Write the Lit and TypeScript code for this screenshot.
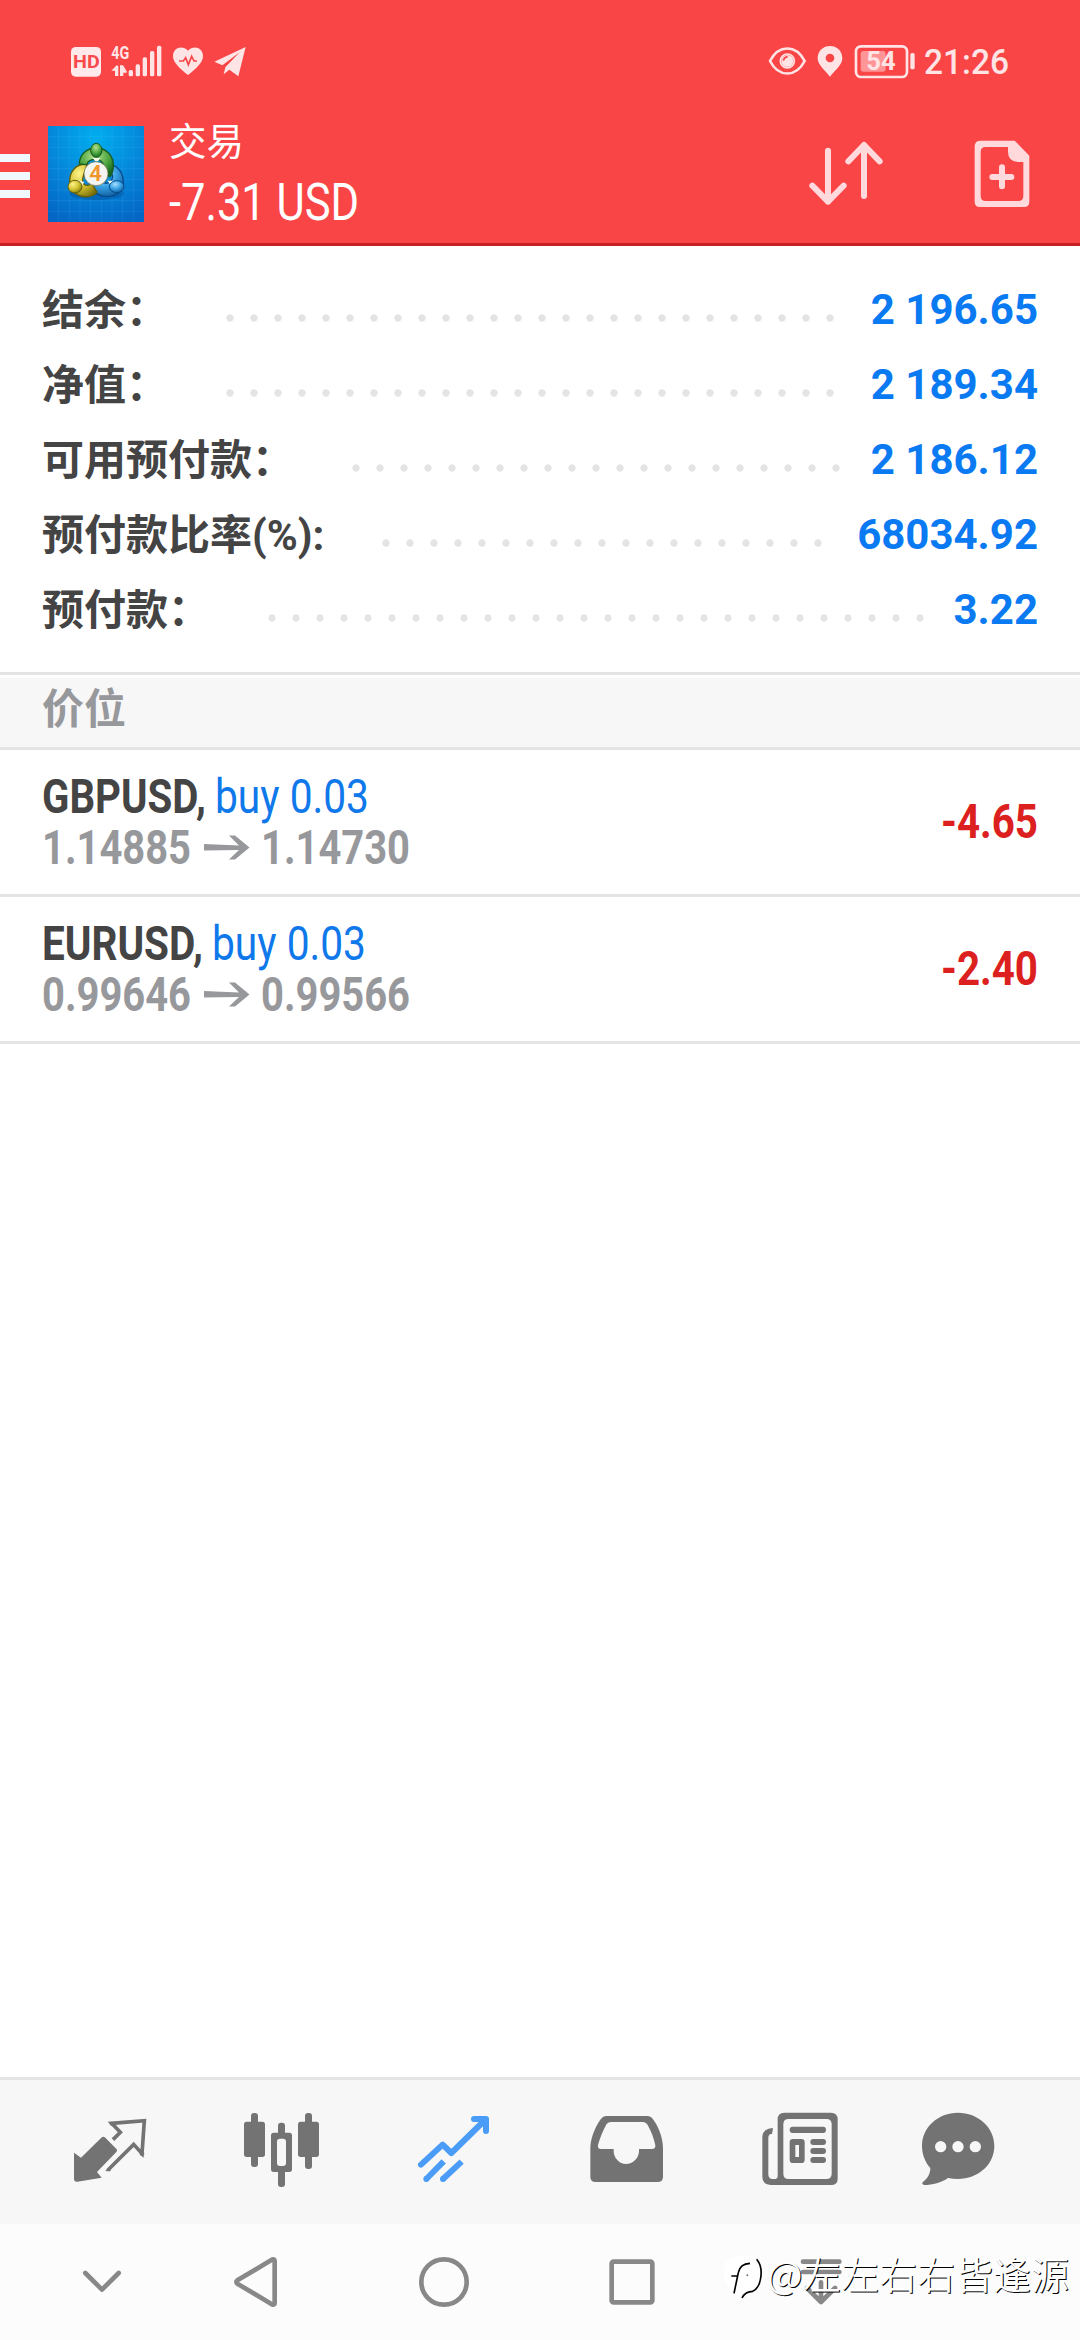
import { LitElement, html, svg, css } from "lit";
import { customElement, property } from "lit/decorators.js";

interface Summary { label: string; dots: number; value: string; }
interface Position {
  symbol: string; symbolWidth: number; side: string; sideWidth: number;
  from: string; to: string; profit: string;
}

/** A single line of text, condensed or widened to a given advance width. */
@customElement("fit-text")
class FitText extends LitElement {
  @property() text = "";
  @property({ type: Number }) width = 100;
  @property({ type: Number }) height = 50;
  @property({ type: Number }) base = 40;
  static styles = css`
    :host { display: block; flex: none; }
    svg { display: block; overflow: visible; }
    text { fill: currentColor; white-space: pre; }
  `;
  render() {
    return html`<svg width=${this.width} height=${this.height}>
      <text x="0" y=${this.base} textLength=${this.width} lengthAdjust="spacingAndGlyphs">${this.text}</text>
    </svg>`;
  }
}

@customElement("app-root")
class AppRoot extends LitElement {
  private summary: Summary[] = [
    { label: "结余：", dots: 26, value: "2 196.65" },
    { label: "净值：", dots: 26, value: "2 189.34" },
    { label: "可用预付款：", dots: 21, value: "2 186.12" },
    { label: "预付款比率(%):", dots: 19, value: "68034.92" },
    { label: "预付款：", dots: 28, value: "3.22" },
  ];

  private positions: Position[] = [
    { symbol: "GBPUSD,", symbolWidth: 164, side: "buy 0.03", sideWidth: 154, from: "1.14885", to: "1.14730", profit: "-4.65" },
    { symbol: "EURUSD,", symbolWidth: 161, side: "buy 0.03", sideWidth: 154, from: "0.99646", to: "0.99566", profit: "-2.40" },
  ];

  static styles = css`
    :host {
      display: flex; flex-direction: column; position: relative;
      width: 1080px; height: 2340px; overflow: hidden;
      background: #fff; color: #444;
      font-family: Roboto, "Noto Sans CJK SC", sans-serif;
    }
    svg { display: block; flex: none; }
    .header { box-sizing: border-box; height: 246px; background: #fa4547; border-bottom: 3px solid #c92024; }
    .status { display: flex; justify-content: space-between; height: 90px; }
    .status text { font-family: Roboto, sans-serif; font-weight: 500; }
    .status .strong { font-weight: 700; }
    .toolbar { display: flex; height: 153px; }
    .menu { display: flex; flex-direction: column; gap: 10px; padding-top: 64px; width: 48px; }
    .menu i { width: 30px; height: 8px; background: #f0f7ff; }
    .logo { padding-top: 36px; }
    .title { padding: 27px 0 0 25px; color: #fff; flex: 1; }
    .title .name { font-size: 37.5px; line-height: 50px; height: 50px; color: #fff; }
    .title .sum { font-size: 52px; font-weight: 450; }
    .summary { padding: 27px 42px 0; height: 399px; display: flex; flex-direction: column; }
    .row { display: flex; align-items: center; height: 75px; line-height: 75px; font-size: 42px; }
    .row .label { font-weight: 700; white-space: nowrap; margin-right: 50px; }
    .row .dots {
      height: 24px; margin-top: 14px;
      background: radial-gradient(circle at 12px 12px, #e4e4e4 3.3px, rgba(228, 228, 228, 0) 4px) 0 0 / 24px 24px;
    }
    .row .value { margin: 0 0 2px auto; font-weight: 700; color: #0a7af2; white-space: pre; }
    .section {
      box-sizing: border-box; height: 78px; border-top: 3px solid #e4e4e4; border-bottom: 3px solid #e4e4e4;
      background: linear-gradient(#fff 3px, #f7f7f7 3px);
      padding-left: 42px; font-size: 42px; line-height: 69px; font-weight: 700; color: #97989c;
    }
    .position {
      box-sizing: border-box; height: 147px; border-bottom: 3px solid #e4e4e4; padding: 16px 42px 0;
      display: flex; justify-content: space-between; font-size: 48px; font-weight: 700;
    }
    .line { display: flex; }
    .symbol { color: #444; margin-right: 9px; }
    .side { color: #0f78ea; font-weight: 450; }
    .prices { color: #97989c; }
    .profit { color: #dc2020; padding-top: 25px; }
    .space { flex: 1; }
    .tabs {
      box-sizing: border-box; height: 147px; border-top: 3px solid #e4e4e4; background: #f7f7f7;
      display: flex; padding: 0 24px; color: #737373;
    }
    .nav { height: 116px; background: #fcfcfc; display: flex; color: #888; }
    .mark {
      position: absolute; left: 722px; top: 2250px; display: flex; align-items: center; height: 56px;
      color: #fff; font-family: "Noto Sans CJK SC", sans-serif; font-weight: 350;
      font-size: 38px; line-height: 56px; white-space: nowrap; text-shadow: 1px 1px 0.5px #000;
    }
    .mark span { padding-bottom: 10px; }
    .mark .at { width: 36px; margin-left: 3px; }
  `;

  private statusLeft() {
    return html`<svg width="380" height="90" viewBox="0 -90 1140 270">
      <rect x="213" y="51" width="90" height="89" rx="14" fill="#ffe9ea"></rect>
      <text class="strong" x="219" y="115" font-size="57" fill="#f94a4c" textLength="80" lengthAdjust="spacingAndGlyphs">HD</text>
      <g fill="#ffe4e5">
        <text class="strong" x="334" y="87" font-size="54" textLength="54" lengthAdjust="spacingAndGlyphs">4G</text>
        <path d="M350 106L355 108V138H345V122H334ZM360 106H369L380 124V128H370V138H360Z"></path>
        <rect x="386" y="120" width="13" height="19" rx="5"></rect>
        <rect x="407" y="103" width="13" height="36" rx="5"></rect>
        <rect x="428" y="82" width="13" height="57" rx="5"></rect>
        <rect x="450" y="63" width="13" height="76" rx="5"></rect>
        <rect x="471" y="47" width="13" height="92" rx="5"></rect>
        <path d="M564 135C540 116 519 98 519 78C519 52 548 44 564 62C580 44 609 52 609 78C609 98 588 116 564 135Z"></path>
        <path d="M737 51L643 95L667 106L719 67L676 112L671 133L688 119L715 139Z"></path>
      </g>
      <path d="M537 93H550L557 83L565 104L575 79L582 93H591" fill="none" stroke="#f94547" stroke-width="5"></path>
    </svg>`;
  }

  private statusRight() {
    return html`<svg width="340" height="90" viewBox="0 -90 1020 270">
      <rect x="362" y="63" width="75" height="62" rx="9" fill="#ff9597"></rect>
      <g fill="none" stroke="#ffe4e5" stroke-width="8">
        <path d="M90 93C116 43 168 43 194 93C168 143 116 143 90 93Z" stroke-linejoin="round"></path>
        <circle cx="142" cy="93" r="21" stroke-width="5"></circle>
        <rect x="348" y="49" width="153" height="92" rx="15"></rect>
      </g>
      <g fill="#ffe4e5">
        <circle cx="142" cy="93" r="18"></circle>
        <path fill-rule="evenodd" d="M270 140C255 121 233 105 233 85C233 62 250 48 270 48C290 48 307 62 307 85C307 105 285 121 270 140ZM270 71A13 13 0 1 0 270 97A13 13 0 1 0 270 71Z"></path>
        <rect x="511" y="69" width="13" height="49" rx="5"></rect>
        <text class="strong" x="379" y="120" font-size="76" textLength="88" lengthAdjust="spacingAndGlyphs">54</text>
        <text x="552" y="131" font-size="103" textLength="255" lengthAdjust="spacingAndGlyphs">21:26</text>
      </g>
      <path d="M130 92Q132 82 143 80" fill="none" stroke="#fa4547" stroke-width="5"></path>
    </svg>`;
  }

  private logo() {
    return html`<svg width="96" height="96" viewBox="144 288 288 288">
      <defs>
        <radialGradient id="sky" cx=".5" cy=".12" r=".95"><stop offset="0" stop-color="#00adef"></stop><stop offset=".55" stop-color="#0584d8"></stop><stop offset="1" stop-color="#0365c4"></stop></radialGradient>
        <radialGradient id="gr" cx=".45" cy=".3" r=".7"><stop offset="0" stop-color="#b5e08f"></stop><stop offset=".6" stop-color="#4da640"></stop><stop offset="1" stop-color="#17691f"></stop></radialGradient>
        <radialGradient id="ye" cx=".35" cy=".3" r=".8"><stop offset="0" stop-color="#fff48a"></stop><stop offset=".55" stop-color="#cfc02d"></stop><stop offset="1" stop-color="#786d0a"></stop></radialGradient>
        <radialGradient id="bl" cx=".4" cy=".3" r=".8"><stop offset="0" stop-color="#a6e0ff"></stop><stop offset=".5" stop-color="#36a0e3"></stop><stop offset="1" stop-color="#084f91"></stop></radialGradient>
      </defs>
      <rect x="144" y="288" width="288" height="288" fill="url(#sky)"></rect>
      <path d="M176 288V576M208 288V576M240 288V576M272 288V576M304 288V576M336 288V576M368 288V576M400 288V576M144 320H432M144 352H432M144 384H432M144 416H432M144 448H432M144 480H432M144 512H432M144 544H432" stroke="#6cc5f5" stroke-opacity=".2" stroke-width="2"></path>
      <ellipse cx="290" cy="490" rx="82" ry="20" fill="#02438a" opacity=".35"></ellipse>
      <path d="M323 403C350 403 369 425 370 454C372 484 348 500 322 500C298 500 280 488 270 470L300 452C320 468 338 456 338 438Z" fill="url(#bl)" stroke="#074c8d" stroke-width="4"></path>
      <path d="M262 402C228 400 209 424 209 454C210 486 235 502 262 500C275 499 286 494 291 486L276 462C252 474 244 458 250 438Z" fill="url(#ye)" stroke="#665f0a" stroke-width="4"></path>
      <path d="M238 402C238 372 262 354 289 354C318 354 341 376 340 408C340 422 336 432 330 440L310 430C318 404 304 388 288 388C272 388 262 394 260 404Z" fill="url(#gr)" stroke="#1a5d22" stroke-width="4"></path>
      <path d="M278 384H301L294 394H286ZM232 450L253 456L241 474ZM322 452H340L333 466Z" fill="#f5fae8"></path>
      <ellipse cx="289" cy="361" rx="17" ry="21" fill="url(#gr)" stroke="#145b1c" stroke-width="3"></ellipse>
      <ellipse cx="225" cy="470" rx="21" ry="19" fill="url(#ye)" stroke="#665f0a" stroke-width="3"></ellipse>
      <ellipse cx="350" cy="470" rx="22" ry="18" fill="url(#bl)" stroke="#074c8d" stroke-width="3"></ellipse>
      <circle cx="288" cy="431" r="36" fill="#f4f4f1" stroke="#66663a" stroke-width="2"></circle>
      <text x="268" y="454" font-size="66" font-family="Roboto, sans-serif" font-weight="600" fill="#f0962d" textLength="38" lengthAdjust="spacingAndGlyphs">4</text>
    </svg>`;
  }

  private tools() {
    return html`<svg width="340" height="153" viewBox="0 180 1020 459" color="#ffd9db">
      <path d="M264 362V515M217 467L264 515L311 467M372 498V345M325 394L372 345L419 394" fill="none" stroke="currentColor" stroke-width="18" stroke-linecap="round" stroke-linejoin="round"></path>
      <path fill="currentColor" fill-rule="evenodd" d="M721 332H824L868 377V515Q868 531 852 531H720Q704 531 704 515V349Q704 332 721 332ZM737 351Q722 351 722 366V498Q722 513 737 513H835Q850 513 850 498V396H834Q804 394 804 365V351Z"></path>
      <path d="M786 412V469M757 441H814" stroke="currentColor" stroke-width="18" stroke-linecap="round"></path>
    </svg>`;
  }

  private tab(x: number, body: unknown) {
    return html`<svg width="172" height="144" viewBox="${x} 30 516 432" fill="currentColor">${body}</svg>`;
  }

  private tabs() {
    return [
      this.tab(-18, svg`
        <path d="M132 248L153 263L214 203Q220 198 226 203L260 238Q263 242 259 246L201 306L215 323L142 335Q132 336 132 326Z"/>
        <path d="M249 209L271 187L245 160L343 152L336 251L311 223L234 300" fill="none" stroke="currentColor" stroke-width="11"/>
        <circle cx="245" cy="161" r="6"/><circle cx="336" cy="251" r="7"/><path d="M226 302L234 294L243 302Q235 306 226 302Z"/>`),
      this.tab(498, svg`
        <rect x="642" y="155" width="63" height="106" rx="8"/><rect x="663" y="129" width="21" height="162" rx="9"/>
        <rect x="804" y="155" width="63" height="106" rx="8"/><rect x="825" y="129" width="21" height="168" rx="9"/>
        <rect x="744" y="158" width="21" height="40" rx="9"/><rect x="744" y="296" width="21" height="55" rx="9"/>
        <path fill-rule="evenodd" d="M731 188H778Q786 188 786 196V298Q786 306 778 306H731Q723 306 723 298V196Q723 188 731 188ZM750 206Q741 206 741 215V279Q741 288 750 288H759Q768 288 768 279V215Q768 206 759 206Z"/>`),
      this.tab(-6, svg`
        <g fill="none" stroke="#4a9cf6" stroke-width="18" stroke-linejoin="round">
          <path d="M153 284L218 224L244 249L345 150" stroke-linecap="round"/>
          <path d="M312 147H348V183" stroke-linecap="round"/>
          <path d="M169 327L221 274M219 327L275 275"/>
        </g><g fill="#4a9cf6"><circle cx="169" cy="327" r="9"/><circle cx="219" cy="327" r="9"/><path d="M330 147H348V166Z"/></g>`),
      this.tab(510, svg`
        <path fill-rule="evenodd" d="M708 138H832Q842 138 849 148C868 174 879 206 879 236V320Q879 336 863 336H677Q661 336 661 320V236C661 206 674 174 692 148Q699 138 708 138ZM724 156Q713 156 708 165C698 184 689 207 684 225Q682 237 693 237H731V244C731 264 748 282 768 282C789 282 807 264 807 244V237H846Q857 237 856 226C852 206 844 184 833 165Q828 156 818 156Z"/>`),
      this.tab(-24, svg`
        <path fill-rule="evenodd" d="M193 128H333Q353 128 353 148V326Q353 345 333 345H152Q127 343 127 320V200Q128 176 159 174L156 192Q145 191 145 204V313Q145 327 158 327H167Q173 327 173 319V148Q173 128 193 128ZM206 147Q190 147 190 163V311Q190 327 206 327H319Q335 327 335 311V163Q335 147 319 147Z"/>
        <rect x="209" y="170" width="109" height="19" rx="9"/><rect x="271" y="207" width="47" height="18" rx="9"/><rect x="271" y="234" width="47" height="18" rx="9"/><rect x="271" y="261" width="47" height="18" rx="9"/>
        <path fill-rule="evenodd" d="M219 207H244Q254 207 254 217V269Q254 279 244 279H219Q209 279 209 269V217Q209 207 219 207ZM226 225V261H237V225Z"/>`),
      this.tab(492, svg`
        <path fill-rule="evenodd" d="M714 128C774 128 823 172 823 228C823 284 774 327 714 327Q698 327 684 324C664 338 638 345 612 345Q603 341 609 336C623 325 631 311 631 294C615 276 606 253 606 228C606 172 654 128 714 128ZM662 213A17 17 0 1 0 662 247A17 17 0 1 0 662 213ZM714 213A17 17 0 1 0 714 247A17 17 0 1 0 714 213ZM766 213A17 17 0 1 0 766 247A17 17 0 1 0 766 213Z"/>`),
    ];
  }

  private navKey(x: number, w: number, body: unknown) {
    return html`<svg width=${w} height="116" viewBox="${x} 72 ${w * 3} 348" fill="none" stroke="currentColor" stroke-width="14" stroke-linecap="round" stroke-linejoin="round">${body}</svg>`;
  }

  private nav() {
    return [
      this.navKey(0, 162, svg`<path d="M256 219L306 269L356 219"/>`),
      this.navKey(486, 188, svg`<path d="M818 178Q824 178 824 184V308Q824 314 818 314L712 251Q706 246 712 241Z"/>`),
      this.navKey(1050, 188, svg`<circle cx="1332" cy="246" r="68"/>`),
      this.navKey(-66, 188, svg`<rect x="155" y="185" width="122" height="122" rx="6"/>`),
      this.navKey(498, 188, svg`<path d="M729 185H838M729 216H838M783 247V303M741 264L783 306L825 264"/>`),
    ];
  }

  render() {
    return html`
      <div class="header">
        <div class="status">${this.statusLeft()}${this.statusRight()}</div>
        <div class="toolbar">
          <div class="menu"><i></i><i></i><i></i></div>
          <div class="logo">${this.logo()}</div>
          <div class="title">
            <div class="name">交易</div>
            <fit-text class="sum" text="-7.31 USD" width="190" height="60" base="53"></fit-text>
          </div>
          ${this.tools()}
        </div>
      </div>
      <div class="summary">
        ${this.summary.map((r) => html`<div class="row">
          <span class="label">${r.label}</span>
          <span class="dots" style="width:${r.dots * 24}px"></span>
          <span class="value">${r.value}</span>
        </div>`)}
      </div>
      <div class="section">价位</div>
      ${this.positions.map((p) => html`<div class="position">
        <div>
          <div class="line">
            <fit-text class="symbol" text=${p.symbol} width=${p.symbolWidth} height="51" base="47"></fit-text>
            <fit-text class="side" text=${p.side} width=${p.sideWidth} height="51" base="47"></fit-text>
          </div>
          <div class="line prices">
            <fit-text text=${p.from} width="149" height="51" base="47"></fit-text>
            <svg width="70" height="51" viewBox="-1 0 70 51"><path d="M12 27L47 28.5L37 18.5H43L57.5 30.5L43 42.5H37L47 33L12 33.5Z" fill="currentColor"></path></svg>
            <fit-text text=${p.to} width="149" height="51" base="47"></fit-text>
          </div>
        </div>
        <fit-text class="profit" text=${p.profit} width="97" height="51" base="47"></fit-text>
      </div>`)}
      <div class="space"></div>
      <div class="tabs">${this.tabs()}</div>
      <div class="nav">${this.nav()}</div>
      <div class="mark">
        <svg width="42" height="48" viewBox="488 174 126 144">
          <path d="M536 180Q492 182 494 232Q494 280 530 290L552 304Q606 284 606 232Q606 182 560 180Z" fill="#fff"></path>
          <path d="M516 240H534M524 292L537 230Q542 203 572 202M592 190Q610 212 604 246Q600 276 580 286Q558 286 548 306" fill="none" stroke="#000" stroke-width="5"></path>
          <circle cx="564" cy="238" r="3" fill="#777"></circle>
        </svg>
        <span class="at">@</span><span>左左右右皆逢源</span>
      </div>
    `;
  }
}
